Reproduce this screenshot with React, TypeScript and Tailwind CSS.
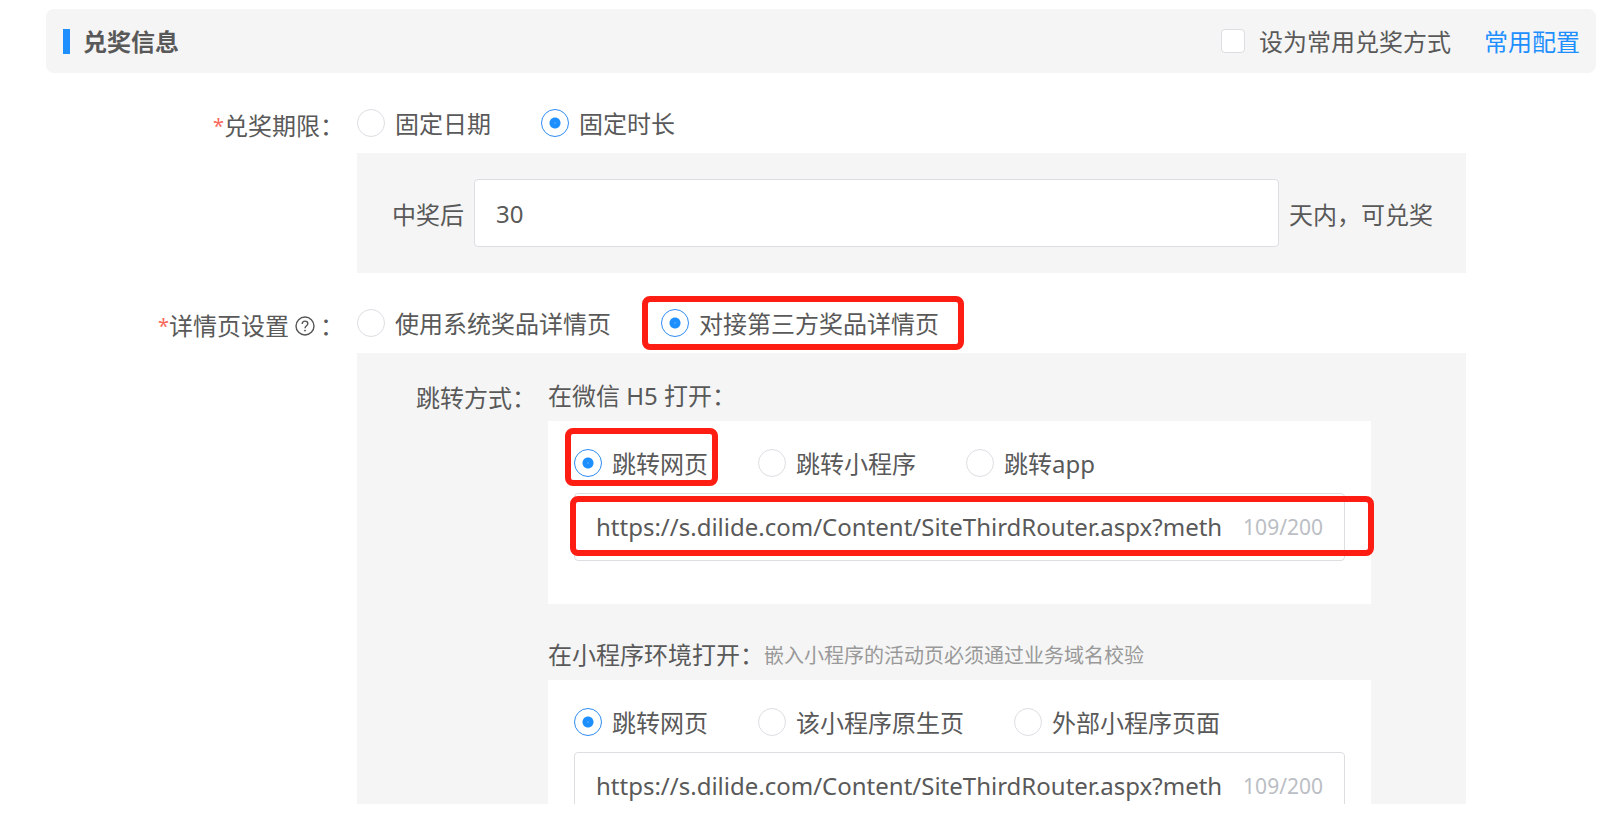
import { useState, type ReactNode } from "react";

function Radio({
  name,
  label,
  checked,
  onSelect,
  children,
}: {
  name: string;
  label: string;
  checked: boolean;
  onSelect: () => void;
  children?: ReactNode;
}) {
  return (
    <label className="relative flex cursor-pointer items-center gap-[10px] whitespace-nowrap">
      <input
        type="radio"
        name={name}
        checked={checked}
        onChange={onSelect}
        className="size-7 shrink-0 appearance-none rounded-full border border-[#dcdee2] bg-white checked:border-[#2d8cf0] checked:bg-[radial-gradient(circle,#8cc4ff_0px,#1e8fff_1px,#1e8fff_5px,#ffffff_6px)]"
      />
      <span className="pt-0.5">{label}</span>
      {children}
    </label>
  );
}

function RadioRow({
  name,
  options,
  initial,
  marked,
}: {
  name: string;
  options: string[];
  initial: number;
  marked?: { index: number; frame: string };
}) {
  const [value, setValue] = useState(initial);
  return (
    <div className="flex h-8 items-center gap-[50px]" role="radiogroup" aria-label={name}>
      {options.map((option, i) => (
        <Radio
          key={option}
          name={name}
          label={option}
          checked={value === i}
          onSelect={() => setValue(i)}
        >
          {marked?.index === i && <Marker className={marked.frame} />}
        </Radio>
      ))}
    </div>
  );
}

function Marker({ className }: { className: string }) {
  return (
    <span
      className={`pointer-events-none absolute rounded-lg border-6 border-[#fd1d12] ${className}`}
    />
  );
}

function UrlField({ label, children }: { label: string; children?: ReactNode }) {
  const [url, setUrl] = useState("https://s.dilide.com/Content/SiteThirdRouter.aspx?meth");
  return (
    <div className="relative mt-[14px] flex h-[68px] items-center gap-2 rounded border border-[#dcdee2] bg-white pr-[21px] pl-[21px]">
      <input
        type="text"
        aria-label={label}
        value={url}
        onChange={(e) => setUrl(e.target.value)}
        className="min-w-0 flex-1 bg-transparent outline-none"
      />
      <span className="text-[21px] text-[#bbbec4]">109/200</span>
      {children}
    </div>
  );
}

function FormRow({ label, children }: { label: ReactNode; children: ReactNode }) {
  return (
    <div className="mt-[34px] flex">
      <div className="mr-[13px] flex h-[38px] w-[298px] shrink-0 items-center justify-end whitespace-nowrap">
        <span className="text-xl leading-8 text-[#f8685c]">*</span>
        {label}
      </div>
      <div className="mr-[130px] min-w-0 flex-1">{children}</div>
    </div>
  );
}

function HelpIcon() {
  return (
    <svg
      viewBox="0 0 20 20"
      className="mr-[5px] ml-[6px] size-5"
      fill="none"
      stroke="#555555"
      strokeWidth="1.4"
      aria-hidden="true"
    >
      <circle cx="10" cy="10" r="9" />
      <path d="M7.2 7.9c0-1.7 1.2-2.8 2.8-2.8s2.8 1 2.8 2.6c0 2-2.8 2.2-2.8 4.5" />
      <circle cx="10" cy="14.6" r="0.6" fill="#555555" strokeWidth="0.8" />
    </svg>
  );
}

export default function App() {
  return (
    <div className="h-screen bg-white pb-6 font-['Noto_Sans','Noto_Sans_CJK_SC',sans-serif] text-2xl leading-8 text-[#595959]">
      <main className="h-full overflow-hidden pt-[9px] pr-1 pl-[46px]">
        <header className="flex h-16 items-center rounded-lg bg-[#f5f5f5] pr-4 pl-[17px]">
          <span className="mr-[13px] h-[25px] w-[7px] bg-[#1e8fff]" />
          <h2 className="flex-1 pt-0.5 font-bold">兑奖信息</h2>
          <label className="mr-[33px] flex cursor-pointer items-center gap-[14px]">
            <input
              type="checkbox"
              className="size-6 appearance-none rounded border border-[#dcdee2] bg-white checked:bg-[#1e8fff]"
            />
            <span className="pt-0.5">设为常用兑奖方式</span>
          </label>
          <a href="#config" className="pt-0.5 text-[#1e8fff]">
            常用配置
          </a>
        </header>

        <FormRow label="兑奖期限：">
          <RadioRow name="兑奖期限" options={["固定日期", "固定时长"]} initial={1} />
          <div className="mt-[14px] flex items-center gap-[10px] bg-[#f5f5f5] py-[26px] pr-[33px] pl-[35px]">
            <label htmlFor="days" className="pt-1 whitespace-nowrap">
              中奖后
            </label>
            <input
              id="days"
              type="text"
              defaultValue="30"
              className="h-[68px] min-w-0 flex-1 rounded border border-[#dcdee2] bg-white px-[21px] outline-none"
            />
            <span className="pt-1 whitespace-nowrap">天内，可兑奖</span>
          </div>
        </FormRow>

        <FormRow
          label={
            <>
              详情页设置
              <HelpIcon />
              ：
            </>
          }
        >
          <RadioRow
            name="详情页设置"
            options={["使用系统奖品详情页", "对接第三方奖品详情页"]}
            initial={1}
            marked={{ index: 1, frame: "-top-[10px] -right-[25px] -bottom-[10px] -left-[19px]" }}
          />
          <div className="mt-[14px] flex bg-[#f5f5f5] pt-[27px] pr-[95px] pb-8 pl-[59px]">
            <div className="w-[132px] shrink-0 leading-9">跳转方式：</div>
            <div className="min-w-0 flex-1">
              <h3>在微信 H5 打开：</h3>
              <section className="mt-[9px] bg-white px-[26px] pt-[26px] pb-[43px]">
                <RadioRow
                  name="微信H5跳转方式"
                  options={["跳转网页", "跳转小程序", "跳转app"]}
                  initial={0}
                  marked={{ index: 0, frame: "-top-[18px] -right-[10px] -bottom-[6px] -left-[9px]" }}
                />
                <UrlField label="微信H5跳转链接">
                  <Marker className="top-[2px] -right-[30px] bottom-[4px] -left-[5px]" />
                </UrlField>
              </section>

              <h3 className="mt-[35px] flex items-center">
                在小程序环境打开：
                <span className="pt-0.5 text-xl leading-7 text-[#999999]">
                  嵌入小程序的活动页必须通过业务域名校验
                </span>
              </h3>
              <section className="mt-[9px] bg-white px-[26px] pt-[26px] pb-[43px]">
                <RadioRow
                  name="小程序跳转方式"
                  options={["跳转网页", "该小程序原生页", "外部小程序页面"]}
                  initial={0}
                />
                <UrlField label="小程序跳转链接" />
              </section>
            </div>
          </div>
        </FormRow>
      </main>
    </div>
  );
}
